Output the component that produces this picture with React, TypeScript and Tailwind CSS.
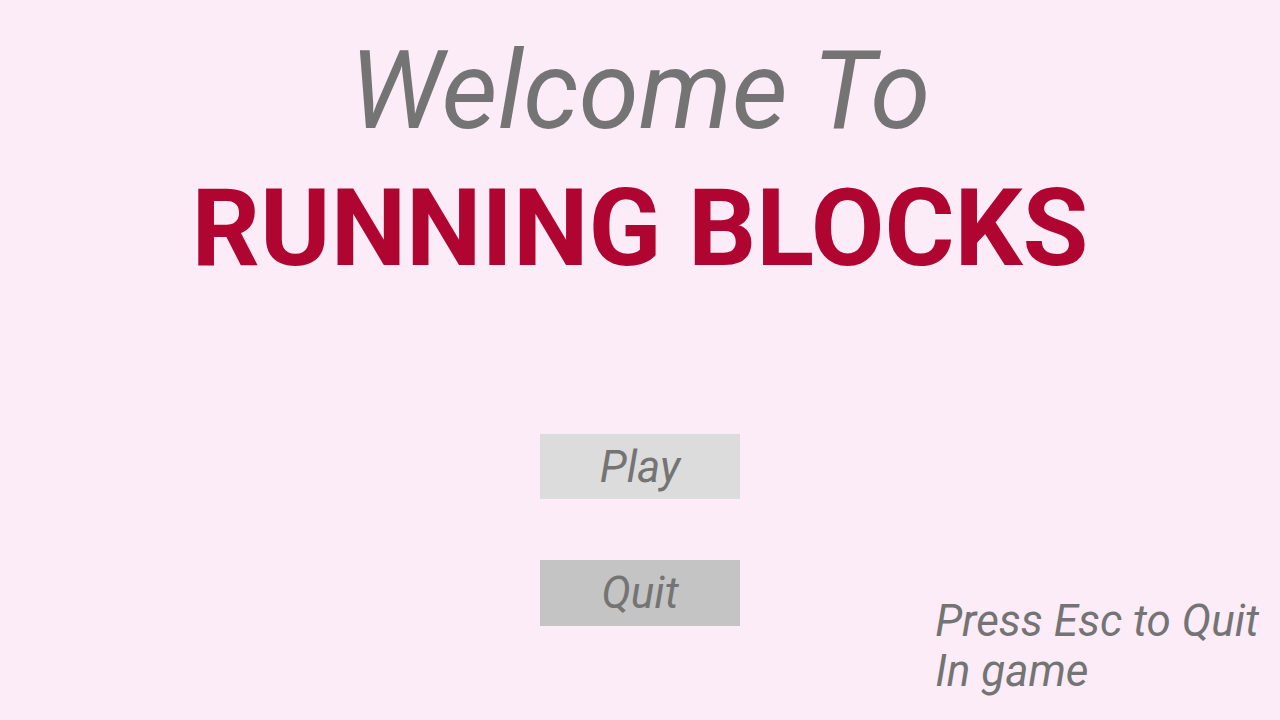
import React from 'react';

export default function App() {
  return (
    <div
      className="w-[1280px] h-[720px] bg-[#fbecf7] flex flex-col items-center overflow-hidden"
      style={{ fontFamily: 'Roboto, "Noto Sans", sans-serif' }}
    >
      <h1 className="mt-[37px] text-[109px] leading-none italic font-normal text-[#747474]">Welcome To</h1>
      <h2 className="mt-[29px] text-[107px] leading-none font-bold text-[#b00531]">RUNNING BLOCKS</h2>

      <div className="mt-[152px] w-full grid grid-cols-[1fr_200px_1fr]">
        <div />
        <div className="flex flex-col gap-[61px]">
          <button className="h-[65px] w-[200px] bg-[#dcdcdc] text-[44px] italic text-[#747474] flex items-center justify-center">
            Play
          </button>
          <button className="h-[66px] w-[200px] bg-[#c4c4c4] text-[44px] italic text-[#747474] flex items-center justify-center">
            Quit
          </button>
        </div>
        <div className="flex items-end justify-end pr-[21px]">
          <p className="text-[44px] italic leading-[50px] text-[#747474] mb-[-70px]">
            Press Esc to Quit
            <br />
            In game
          </p>
        </div>
      </div>
    </div>
  );
}
